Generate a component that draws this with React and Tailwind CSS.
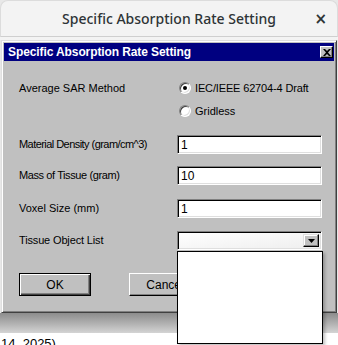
import { useState } from "react";

const sunken =
  "border border-t-[#808080] border-l-[#808080] border-b-white border-r-white shadow-[inset_1px_1px_0_#000,inset_-1px_-1px_0_#dfdfdf]";

const Radio = ({ checked }) => (
  <div className="w-[12px] h-[12px] rounded-full bg-white border border-t-[#808080] border-l-[#808080] border-b-white border-r-white shadow-[inset_1px_1px_0_#404040,inset_-1px_-1px_0_#dfdfdf] flex items-center justify-center">
    {checked && <div className="w-[4px] h-[4px] rounded-full bg-black" />}
  </div>
);

const Field = ({ label, value, tight }) => (
  <div className="flex items-center h-[19px]">
    <span className={`w-[158px] ${tight}`}>{label}</span>
    <div className={`w-[145px] h-[19px] bg-white flex items-center pl-[3px] text-[12px] ${sunken}`}>
      {value}
    </div>
  </div>
);

const App = () => {
  const [method, setMethod] = useState("iec");

  return (
    <div className="relative w-[338px] h-[345px] overflow-hidden bg-[#e8e8e8] font-['Liberation_Sans',Arial,sans-serif] text-[11px] text-black">
      {/* outer window header */}
      <div className="relative h-[37px] bg-[#f3f3f3] rounded-t-[8px] border border-b-[#cfcfcf] border-[#dcdcdc] flex items-center justify-center">
        <span className="font-['Noto_Sans',sans-serif] font-medium text-[14px] text-[#2e3436]">
          Specific Absorption Rate Setting
        </span>
        <span className="absolute right-[10px] top-[7px] font-['DejaVu_Sans',sans-serif] font-bold text-[15px] text-[#2e3436]">
          ×
        </span>
      </div>
      <div className="h-[3px] bg-[#f3f3f3]" />

      {/* win32 dialog */}
      <div className="mx-[1px] h-[273px] bg-[#c0c0c0] border border-t-[#dfdfdf] border-l-[#dfdfdf] border-b-[#404040] border-r-[#404040] shadow-[inset_1px_1px_0_#fff,inset_-1px_-1px_0_#808080] p-[2px] flex flex-col">
        <div className="h-[18px] bg-[#000080] flex items-center justify-between pl-[4px] pr-[1px]">
          <span className="text-white font-bold text-[12px] tracking-[-0.1px]">
            Specific Absorption Rate Setting
          </span>
          <div className="w-[13px] h-[12px] bg-[#c0c0c0] border border-t-white border-l-white border-b-black border-r-black shadow-[inset_-1px_-1px_0_#808080] flex items-center justify-center">
            <svg width="8" height="7" viewBox="0 0 8 7">
              <path d="M0 0h2l2 2 2-2h2L5 3.5 8 7H6L4 5 2 7H0l3-3.5z" fill="#000" />
            </svg>
          </div>
        </div>

        <div className="pl-[15px] pt-[19px] flex flex-col">
          <div className="flex">
            <span className="w-[160px] h-[16px] flex items-center">Average SAR Method</span>
            <div className="flex flex-col gap-[7px]">
              <button
                onClick={() => setMethod("iec")}
                className="h-[16px] flex items-center gap-[4px]"
              >
                <Radio checked={method === "iec"} />
                <span className="tracking-[-0.15px]">IEC/IEEE 62704-4 Draft</span>
              </button>
              <button
                onClick={() => setMethod("gridless")}
                className="h-[16px] flex items-center gap-[4px]"
              >
                <Radio checked={method === "gridless"} />
                <span>Gridless</span>
              </button>
            </div>
          </div>

          <div className="mt-[16px]">
            <Field label="Material Density (gram/cm^3)" value="1" tight="tracking-[-0.55px]" />
          </div>
          <div className="mt-[12px]">
            <Field label="Mass of Tissue (gram)" value="10" tight="tracking-[-0.4px]" />
          </div>
          <div className="mt-[14px]">
            <Field label="Voxel Size (mm)" value="1" tight="" />
          </div>
          <div className="mt-[13px] flex items-center h-[19px]">
            <span className="w-[158px] tracking-[-0.15px]">Tissue Object List</span>
            <div className={`w-[145px] h-[19px] bg-gradient-to-br from-white to-[#eeeeee] flex justify-end p-[2px] ${sunken}`}>
              <div className="w-[16px] h-full bg-[#c0c0c0] border border-t-[#dfdfdf] border-l-[#dfdfdf] border-b-black border-r-black shadow-[inset_-1px_-1px_0_#808080,inset_1px_1px_0_#fff] flex items-center justify-center">
                <svg width="7" height="4" viewBox="0 0 7 4">
                  <path d="M0 0h7L3.5 4z" fill="#000" />
                </svg>
              </div>
            </div>
          </div>

          <div className="mt-[23px] flex gap-[38px]">
            <button className="w-[72px] h-[23px] border border-black bg-[#c0c0c0] shadow-[inset_1px_1px_0_#fff,inset_-1px_-1px_0_#404040,inset_-2px_-2px_0_#808080] text-[12px]">
              OK
            </button>
            <button className="w-[72px] h-[23px] bg-[#c0c0c0] border border-t-white border-l-white border-b-black border-r-black shadow-[inset_-1px_-1px_0_#808080] text-[12px]">
              Cancel
            </button>
          </div>
        </div>
      </div>

      {/* what lies behind the dialog */}
      <div className="h-[20px] bg-gradient-to-b from-[#8c8c8c] to-[#d4d4d4]" />
      <div className="h-[12px] bg-white pl-[1px] pt-[4px] text-[13px] leading-[14px]">14, 2025)</div>

      {/* open combo list */}
      <div className="absolute left-[177px] top-[251px] w-[146px] h-[93px] bg-white border border-black shadow-[2px_2px_3px_rgba(0,0,0,0.25)]" />
    </div>
  );
};

export default App;
